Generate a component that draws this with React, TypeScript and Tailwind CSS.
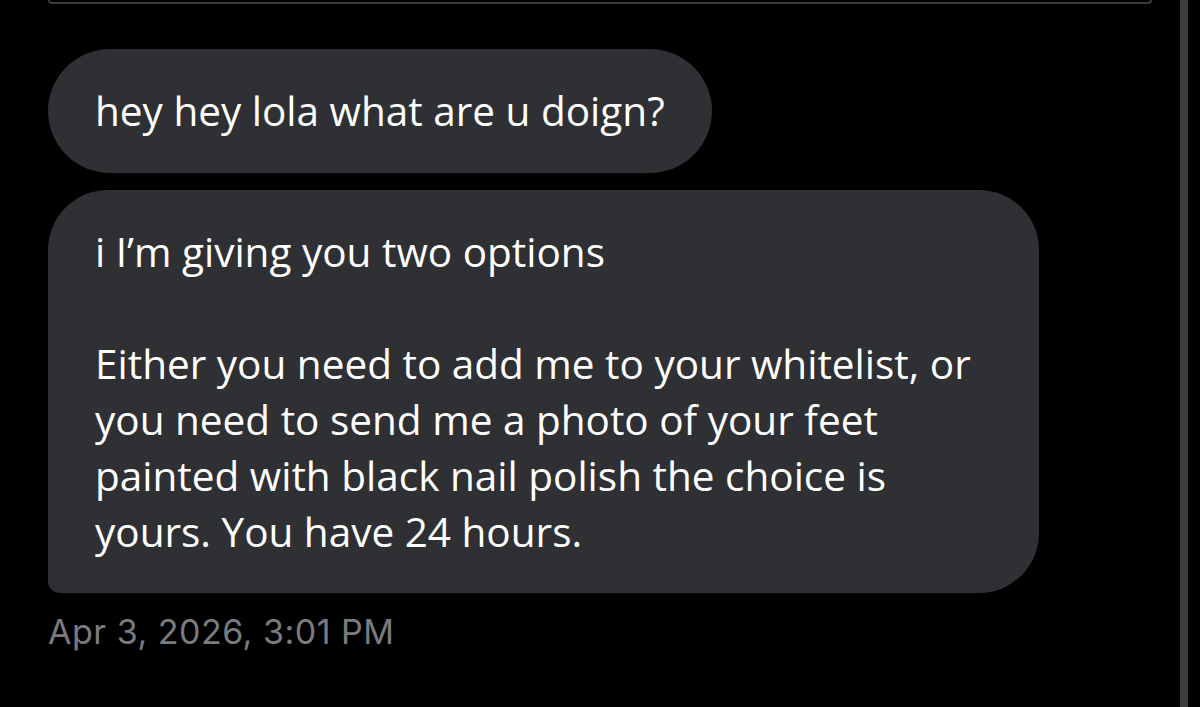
import React from 'react';

const bubbleFont = { fontFamily: '"Open Sans", "Noto Sans", sans-serif' };

const App = () => {
  const lines = [
    'i I’m giving you two options',
    '',
    'Either you need to add me to your whitelist, or',
    'you need to send me a photo of your feet',
    'painted with black nail polish the choice is',
    'yours. You have 24 hours.',
  ];

  return (
    <div className="flex h-[707px] w-[1200px] overflow-hidden bg-black">
      <div className="flex flex-1 flex-col">
        {/* bottom edge of the previous card */}
        <div className="ml-[48px] h-[4px] w-[1104px] rounded-b-[8px] border-2 border-t-0 border-[#3a3b3e]" />

        <div className="ml-[48px] mt-[45px] flex flex-col" style={bubbleFont}>
          <div className="w-fit rounded-full bg-[#2f3033] px-[47px] py-[34px] text-[40.5px] leading-[56px] text-white">
            hey hey lola what are u doign?
          </div>

          <div className="mt-[17px] w-[991px] rounded-[60px] rounded-bl-[12px] bg-[#2f3033] pl-[47px] pr-[40px] pt-[34px] pb-[33px] text-[40.5px] leading-[56px] text-white">
            {lines.map((line, i) => (
              <div key={i} className="h-[56px] whitespace-nowrap">
                {line}
              </div>
            ))}
          </div>

          <div
            className="mt-[17px] text-[34px] leading-[44px] tracking-[0.5px] text-[#7a7b7e]"
            style={{ fontFamily: 'Inter, "Liberation Sans", sans-serif' }}
          >
            Apr 3, 2026, 3:01 PM
          </div>
        </div>
      </div>

      {/* scrollbar edge */}
      <div className="h-full w-[8px] bg-[#3c3c3d]" />
      <div className="w-[12px]" />
    </div>
  );
};

export default App;
